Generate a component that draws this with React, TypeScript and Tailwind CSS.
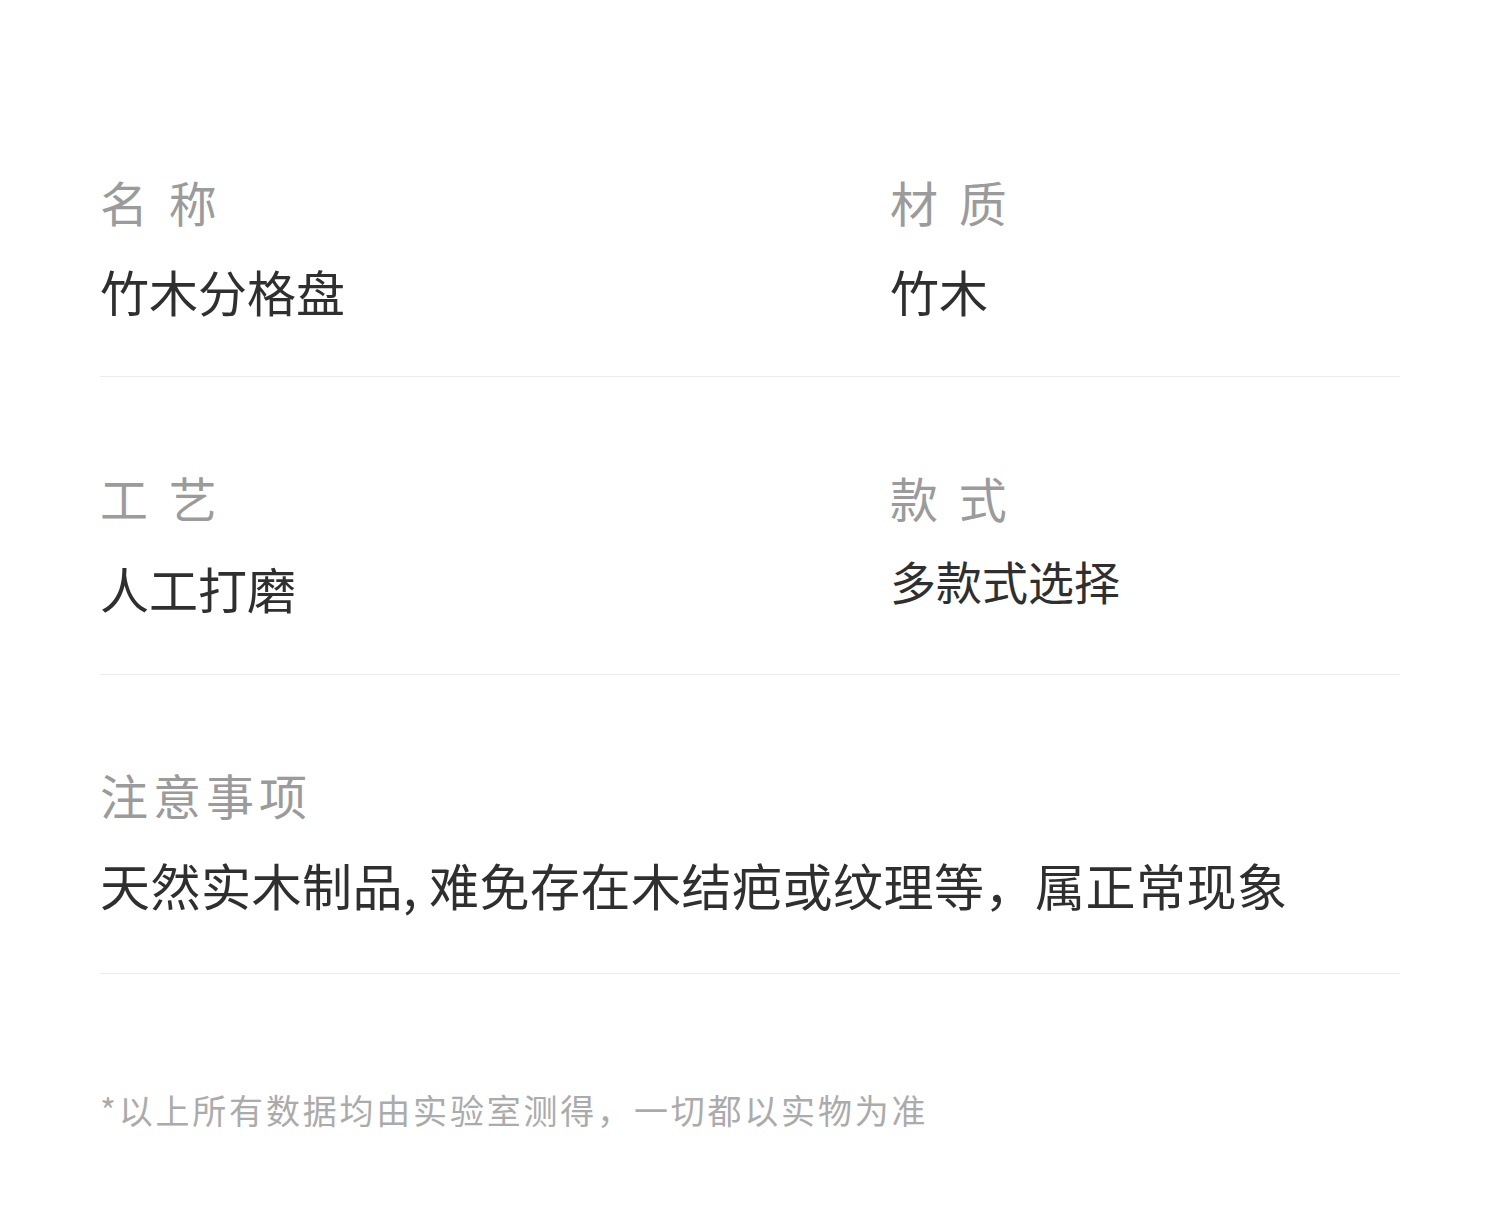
import React from "react";

const font = { fontFamily: '"Noto Sans CJK SC", "Noto Sans", sans-serif' };

function Label({ children }: { children: React.ReactNode }) {
  return (
    <div className="text-[48px] leading-[48px] tracking-[5px] text-[#9b9b9b] whitespace-pre">
      {children}
    </div>
  );
}

function Value({ children, small }: { children: React.ReactNode; small?: boolean }) {
  return (
    <div
      className={
        small
          ? "text-[46px] leading-[46px] text-[#2f2f2f] whitespace-pre"
          : "text-[49px] leading-[49px] text-[#2f2f2f] whitespace-pre"
      }
    >
      {children}
    </div>
  );
}

export default function App() {
  return (
    <div className="w-[1500px] h-[1227px] bg-white" style={font}>
      <div className="px-[100px] pt-[177px]">
        <div className="grid grid-cols-[790px_1fr] pb-[61px] border-b border-[#ececec]">
          <div className="flex flex-col gap-[41px]">
            <Label>名 称</Label>
            <Value>竹木分格盘</Value>
          </div>
          <div className="flex flex-col gap-[41px]">
            <Label>材 质</Label>
            <Value>竹木</Value>
          </div>
        </div>
        <div className="grid grid-cols-[790px_1fr] pt-[96px] pb-[62px] border-b border-[#ececec]">
          <div className="flex flex-col gap-[42px]">
            <Label>工 艺</Label>
            <Value>人工打磨</Value>
          </div>
          <div className="flex flex-col gap-[36px]">
            <Label>款 式</Label>
            <Value small>多款式选择</Value>
          </div>
        </div>
        <div className="flex flex-col gap-[42px] pt-[95px] pb-[64px] border-b border-[#ececec]">
          <Label>注意事项</Label>
          <div className="text-[50px] leading-[49px] tracking-[0.5px] text-[#2f2f2f] whitespace-pre">
            天然实木制品, 难免存在木结疤或纹理等，属正常现象
          </div>
        </div>
        <div className="pt-[119px] text-[34px] leading-[34px] tracking-[2.8px] text-[#ababab] whitespace-pre">
          *以上所有数据均由实验室测得，一切都以实物为准
        </div>
      </div>
    </div>
  );
}
